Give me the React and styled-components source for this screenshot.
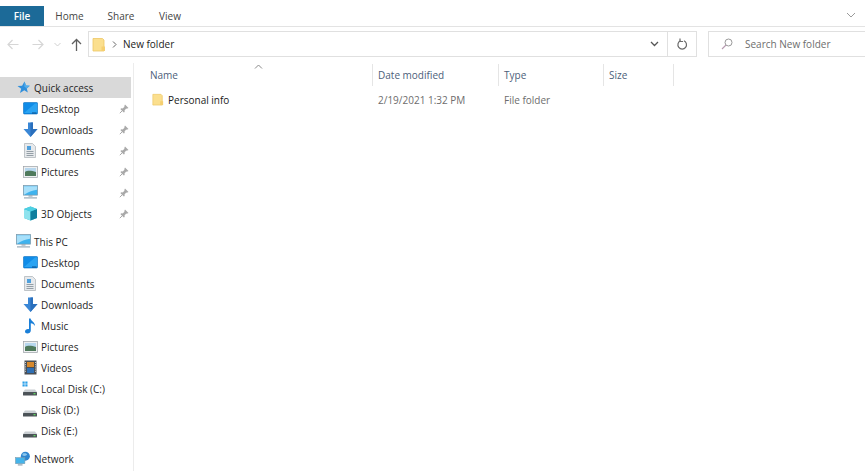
import styled, { createGlobalStyle } from "styled-components";

const Global = createGlobalStyle`
  html, body {
    margin: 0;
    padding: 0;
    height: 100%;
    background: #fff;
    overflow: hidden;
  }
  #root { height: 100%; }
`;

const Window = styled.div`
  width: 865px;
  height: 471px;
  overflow: hidden;
  display: flex;
  flex-direction: column;
  font-family: "Open Sans", "Noto Sans", sans-serif;
  font-size: 10px;
  color: #1a1a1a;
`;

const Ribbon = styled.div`
  box-sizing: border-box;
  height: 27px;
  padding-top: 6px;
  display: flex;
  align-items: stretch;
  border-bottom: 1px solid #e3e3e3;
`;

const Tab = styled.div`
  box-sizing: border-box;
  width: ${(p) => p.$w}px;
  display: flex;
  align-items: center;
  justify-content: center;
  color: ${(p) => (p.$active ? "#fff" : "#444")};
  background: ${(p) => (p.$active ? "#1c6a98" : "transparent")};
  font-weight: ${(p) => (p.$active ? 600 : 400)};
`;

const RibbonEnd = styled.div`
  margin-left: auto;
  width: 28px;
  display: flex;
  align-items: center;
  justify-content: center;
  padding-bottom: 3px;
`;

const NavRow = styled.div`
  box-sizing: border-box;
  height: 26px;
  margin-top: 4px;
  display: flex;
  align-items: stretch;
  flex: none;
`;

const NavButtons = styled.div`
  width: 88px;
  display: grid;
  grid-template-columns: 25px 26px 13px 24px;
  align-items: center;
  justify-items: center;
`;

const AddressBox = styled.div`
  box-sizing: border-box;
  width: 609px;
  display: flex;
  align-items: center;
  border: 1px solid #e0e0e0;
  padding-left: 3px;
  color: #222;
`;

const Crumb = styled.span`
  margin-left: 6px;
`;

const AddressEnd = styled.div`
  margin-left: auto;
  height: 100%;
  display: flex;
  align-items: center;
`;

const RefreshCell = styled.div`
  box-sizing: border-box;
  width: 29px;
  height: 100%;
  margin-left: 8px;
  border-left: 1px solid #e0e0e0;
  display: flex;
  align-items: center;
  justify-content: center;
`;

const SearchBox = styled.div`
  box-sizing: border-box;
  flex: 1;
  margin-left: 11px;
  display: flex;
  align-items: center;
  gap: 12px;
  padding-left: 12px;
  border: 1px solid #e0e0e0;
  border-right: none;
  color: #6d6d6d;
`;

const Body = styled.div`
  flex: 1;
  min-height: 0;
  display: flex;
  margin-top: 6px;
`;

const Sidebar = styled.nav`
  box-sizing: border-box;
  width: 134px;
  flex: none;
  padding-top: 14px;
  padding-right: 2px;
  border-right: 1px solid #ececec;
  display: flex;
  flex-direction: column;
`;

const TreeRow = styled.div`
  height: 21px;
  flex: none;
  display: flex;
  align-items: center;
  gap: 3px;
  padding-left: ${(p) => (p.$top ? 15 : 22)}px;
  background: ${(p) => (p.$selected ? "#d9d9d9" : "transparent")};
  margin-top: ${(p) => p.$gap || 0}px;
  color: #1f1f1f;
`;

const TreeLabel = styled.span`
  flex: 1;
  white-space: nowrap;
`;

const IconSlot = styled.span`
  width: 16px;
  height: 16px;
  flex: none;
  display: flex;
  align-items: center;
  justify-content: center;
`;

const PinSlot = styled.span`
  width: 10px;
  margin-right: 2px;
  display: flex;
  align-items: center;
`;

const Content = styled.main`
  flex: 1;
  display: flex;
  flex-direction: column;
`;

const HeaderRow = styled.div`
  position: relative;
  height: 22px;
  margin-top: 1px;
  display: flex;
  align-items: stretch;
  color: #4c607a;
`;

const HeaderCell = styled.div`
  box-sizing: border-box;
  width: ${(p) => p.$w}px;
  padding-left: ${(p) => p.$pad}px;
  display: flex;
  align-items: center;
  border-right: 1px solid #e5e5e5;
  white-space: nowrap;
`;

const SortCaret = styled.svg`
  position: absolute;
  left: 120px;
  top: 0;
`;

const FileRow = styled.div`
  height: 21px;
  margin-top: 3px;
  display: flex;
  align-items: center;
  color: #6d6d6d;
`;

const FileName = styled.div`
  box-sizing: border-box;
  width: 239px;
  padding-left: 18px;
  display: flex;
  align-items: center;
  gap: 4px;
  color: #1a1a1a;
`;

const FileCell = styled.div`
  box-sizing: border-box;
  width: ${(p) => p.$w}px;
  padding-left: 5px;
  white-space: nowrap;
`;

function FolderIcon({ size = 14 }) {
  return (
    <svg width={size} height={size + 1} viewBox="0 0 14 15">
      <path d="M1 1.5h9.5l1.5 1.5v11H1z" fill="#fbdf8e" stroke="#eec766" strokeWidth="0.8" />
      <path d="M9.5 14V9.5H13V14z" fill="#f5cf70" />
    </svg>
  );
}

function Desktop() {
  return (
    <svg width="15" height="13" viewBox="0 0 15 13">
      <rect x="0.5" y="0.5" width="14" height="11.5" rx="0.8" fill="#0f8ce8" stroke="#0b6fc0" strokeWidth="0.6" />
      <path d="M1 11 12 1.5h2V11z" fill="#2aa3f2" />
      <rect x="9" y="10.5" width="4.5" height="1" fill="#0a4f8c" />
    </svg>
  );
}

function Downloads() {
  return (
    <svg width="15" height="16" viewBox="0 0 15 16">
      <path d="M5 0.5h5V7h4.5L7.5 15 0.5 7H5z" fill="#3a87d6" />
      <path d="M7.5 0.5H10V7h4.5L7.5 15z" fill="#2a6fbc" />
    </svg>
  );
}

function Documents() {
  return (
    <svg width="12" height="15" viewBox="0 0 12 15">
      <path d="M0.5 0.5h8l3 3v11h-11z" fill="#e6e9ec" stroke="#a9afb5" strokeWidth="0.7" />
      <rect x="3" y="3" width="4" height="4" fill="#4fa0dc" />
      <path d="M2.5 8.5h7M2.5 10.5h7M2.5 12.5h7" stroke="#7f8a94" strokeWidth="0.8" />
    </svg>
  );
}

function Pictures() {
  return (
    <svg width="15" height="12" viewBox="0 0 15 12">
      <rect x="0.5" y="0.5" width="14" height="11" fill="#eef0f2" stroke="#9aa0a6" strokeWidth="0.7" />
      <rect x="2" y="2" width="11" height="4" fill="#b7d7ee" />
      <path d="M2 6c3-2 7-1 11 0v4H2z" fill="#4f7a5c" />
    </svg>
  );
}

function Monitor({ w = 15 }) {
  return (
    <svg width={w} height={w * 0.95} viewBox="0 0 15 14">
      <rect x="0.5" y="0.5" width="14" height="9.5" fill="#3fb3ee" stroke="#7d98a8" strokeWidth="0.7" />
      <path d="M1 1h13v3.5C9 5 5 7 1 9.5z" fill="#a8e0fa" />
      <rect x="5.5" y="10" width="4" height="1.5" fill="#9fb0bb" />
      <rect x="1" y="12" width="13" height="1.5" fill="#aebcc6" />
    </svg>
  );
}

function Objects() {
  return (
    <svg width="15" height="15" viewBox="0 0 15 15">
      <path d="M7.5 0.5 14 3v9l-6.5 2.5L1 12V3z" fill="#2bb8cf" />
      <path d="M1 3l6.5 2.5v9L1 12z" fill="#8fe3ee" />
      <path d="M7.5 5.5 14 3v9l-6.5 2.5z" fill="#0f7f9e" />
      <path d="M1 3l6.5-2.5L14 3 7.5 5.5z" fill="#4fd0e3" />
    </svg>
  );
}

function Music() {
  return (
    <svg width="12" height="16" viewBox="0 0 12 16">
      <path d="M5 0.5h1.6c.4 2.6 4.4 3.4 4.4 7.5-1-1.6-2.4-2.6-4.2-2.8V12.5c0 1.8-1.6 3-3.4 3C1.9 15.5 1 14.6 1 13.5c0-1.5 1.8-2.8 4-2.3z" fill="#1a7fd8" />
    </svg>
  );
}

function Videos() {
  return (
    <svg width="13" height="15" viewBox="0 0 13 15">
      <rect x="0.5" y="0.5" width="12" height="14" fill="#4a4f55" />
      <rect x="3" y="2" width="7" height="5" fill="#d8892c" />
      <rect x="3" y="8" width="7" height="5" fill="#2f6fb3" />
      <path d="M1.5 2v11M11.5 2v11" stroke="#c9ced3" strokeWidth="1" strokeDasharray="1 1.2" />
    </svg>
  );
}

function Drive({ windows }) {
  return (
    <svg width="16" height="15" viewBox="0 0 16 15">
      {windows && (
        <g fill="#2a9fe8">
          <rect x="0.5" y="0.5" width="2.2" height="2.2" />
          <rect x="3.3" y="0.5" width="2.2" height="2.2" />
          <rect x="0.5" y="3.3" width="2.2" height="2.2" />
          <rect x="3.3" y="3.3" width="2.2" height="2.2" />
        </g>
      )}
      <path d="M3 8.5h10l2 2.5H1z" fill="#c9ced2" />
      <rect x="1" y="11" width="14" height="3.5" rx="0.5" fill="#4c5358" />
      <rect x="11.5" y="12" width="2" height="1.3" fill="#5fd35f" />
    </svg>
  );
}

function Network() {
  return (
    <svg width="17" height="16" viewBox="0 0 17 16">
      <circle cx="11" cy="5" r="4.8" fill="#2f86cf" />
      <path d="M8 2.5c2-1 4-.5 5 .8-1 1.5-3 2-5 1z" fill="#8cc7ee" />
      <rect x="0.5" y="6.5" width="10" height="6.5" fill="#45b4ea" stroke="#7d98a8" strokeWidth="0.6" />
      <rect x="3" y="13.5" width="5" height="1.5" fill="#9fb0bb" />
    </svg>
  );
}

function Star() {
  return (
    <svg width="13" height="13" viewBox="0 0 13 13">
      <path d="M7.5 0.5 9 4.6l3.8.2-3 2.6 1 4.1L7.3 9.2 3 12l1.2-4.3L0.5 5l4.6-.3z" fill="#2f8fdc" />
      <path d="M7.5 0.5 9 4.6l3.8.2-3 2.6L7.3 5.5z" fill="#55aeea" />
    </svg>
  );
}

function Pin() {
  return (
    <svg width="10" height="10" viewBox="0 0 10 10">
      <path d="M6 0.5 9.5 4 8.4 4.5 7 4.7 5.5 6.5 5.7 8 4.8 8.5 1.5 5.2 2 4.3 3.5 4.5 5.3 3 5.5 1.6z" fill="#a9a9a9" />
      <path d="M3 7 .8 9.2" stroke="#a9a9a9" strokeWidth="1" />
    </svg>
  );
}

const quickAccess = [
  { label: "Desktop", icon: <Desktop /> },
  { label: "Downloads", icon: <Downloads /> },
  { label: "Documents", icon: <Documents /> },
  { label: "Pictures", icon: <Pictures /> },
  { label: "", icon: <Monitor /> },
  { label: "3D Objects", icon: <Objects /> },
];

const thisPc = [
  { label: "Desktop", icon: <Desktop /> },
  { label: "Documents", icon: <Documents /> },
  { label: "Downloads", icon: <Downloads /> },
  { label: "Music", icon: <Music /> },
  { label: "Pictures", icon: <Pictures /> },
  { label: "Videos", icon: <Videos /> },
  { label: "Local Disk (C:)", icon: <Drive windows /> },
  { label: "Disk (D:)", icon: <Drive /> },
  { label: "Disk (E:)", icon: <Drive /> },
];

export default function App() {
  return (
    <Window>
      <Global />
      <Ribbon>
        <Tab $active $w={44}>File</Tab>
        <Tab $w={51}>Home</Tab>
        <Tab $w={52}>Share</Tab>
        <Tab $w={46}>View</Tab>
        <RibbonEnd>
          <svg width="10" height="6" viewBox="0 0 10 6">
            <path d="M1 1l4 4 4-4" fill="none" stroke="#9a9a9a" strokeWidth="1" />
          </svg>
        </RibbonEnd>
      </Ribbon>
      <NavRow>
        <NavButtons>
          <svg width="12" height="11" viewBox="0 0 12 11">
            <path d="M11.5 5.5H1M5.5 1 1 5.5 5.5 10" fill="none" stroke="#d6d6d6" strokeWidth="1.2" />
          </svg>
          <svg width="12" height="11" viewBox="0 0 12 11">
            <path d="M.5 5.5H11M6.5 1 11 5.5 6.5 10" fill="none" stroke="#d6d6d6" strokeWidth="1.2" />
          </svg>
          <svg width="7" height="5" viewBox="0 0 7 5">
            <path d="M.5 1 3.5 4l3-3" fill="none" stroke="#d0d0d0" strokeWidth="1" />
          </svg>
          <svg width="11" height="13" viewBox="0 0 11 13">
            <path d="M5.5 13V2M1 6l4.500-4.500L10 6" fill="none" stroke="#5f5f5f" strokeWidth="1.3" />
          </svg>
        </NavButtons>
        <AddressBox>
          <FolderIcon />
          <Crumb>
            <svg width="5" height="7" viewBox="0 0 5 7">
              <path d="M1 .5l3 3-3 3" fill="none" stroke="#666" strokeWidth="1" />
            </svg>
          </Crumb>
          <Crumb>New folder</Crumb>
          <AddressEnd>
            <svg width="9" height="6" viewBox="0 0 9 6">
              <path d="M1 1l3.5 3.5L8 1" fill="none" stroke="#555" strokeWidth="1.3" />
            </svg>
            <RefreshCell>
              <svg width="12" height="13" viewBox="0 0 12 13">
                <path d="M4.5 2.8a4.3 4.3 0 1 0 3.4 0" fill="none" stroke="#6a6a6a" strokeWidth="1.2" />
                <path d="M4 .5v3h3" fill="none" stroke="#6a6a6a" strokeWidth="1.2" />
              </svg>
            </RefreshCell>
          </AddressEnd>
        </AddressBox>
        <SearchBox>
          <svg width="12" height="12" viewBox="0 0 12 12">
            <circle cx="7.5" cy="4.5" r="3.5" fill="none" stroke="#8f8f8f" strokeWidth="0.9" />
            <path d="M5 7 1 11" stroke="#b79ab0" strokeWidth="1.1" />
          </svg>
          Search New folder
        </SearchBox>
      </NavRow>
      <Body>
        <Sidebar>
          <TreeRow $top $selected>
            <IconSlot><Star /></IconSlot>
            <TreeLabel>Quick access</TreeLabel>
          </TreeRow>
          {quickAccess.map((item, i) => (
            <TreeRow key={i}>
              <IconSlot>{item.icon}</IconSlot>
              <TreeLabel>{item.label}</TreeLabel>
              <PinSlot><Pin /></PinSlot>
            </TreeRow>
          ))}
          <TreeRow $top $gap={7}>
            <IconSlot><Monitor /></IconSlot>
            <TreeLabel>This PC</TreeLabel>
          </TreeRow>
          {thisPc.map((item) => (
            <TreeRow key={item.label}>
              <IconSlot>{item.icon}</IconSlot>
              <TreeLabel>{item.label}</TreeLabel>
            </TreeRow>
          ))}
          <TreeRow $top $gap={7}>
            <IconSlot><Network /></IconSlot>
            <TreeLabel>Network</TreeLabel>
          </TreeRow>
        </Sidebar>
        <Content>
          <HeaderRow>
            <SortCaret width="9" height="6" viewBox="0 0 9 6">
              <path d="M1 4.5 4.5 1 8 4.5" fill="none" stroke="#8a8a8a" strokeWidth="1" />
            </SortCaret>
            <HeaderCell $w={239} $pad={16}>Name</HeaderCell>
            <HeaderCell $w={126} $pad={5}>Date modified</HeaderCell>
            <HeaderCell $w={105} $pad={5}>Type</HeaderCell>
            <HeaderCell $w={70} $pad={5}>Size</HeaderCell>
          </HeaderRow>
          <FileRow>
            <FileName>
              <FolderIcon size={12} />
              Personal info
            </FileName>
            <FileCell $w={126}>2/19/2021 1:32 PM</FileCell>
            <FileCell $w={105}>File folder</FileCell>
          </FileRow>
        </Content>
      </Body>
    </Window>
  );
}
